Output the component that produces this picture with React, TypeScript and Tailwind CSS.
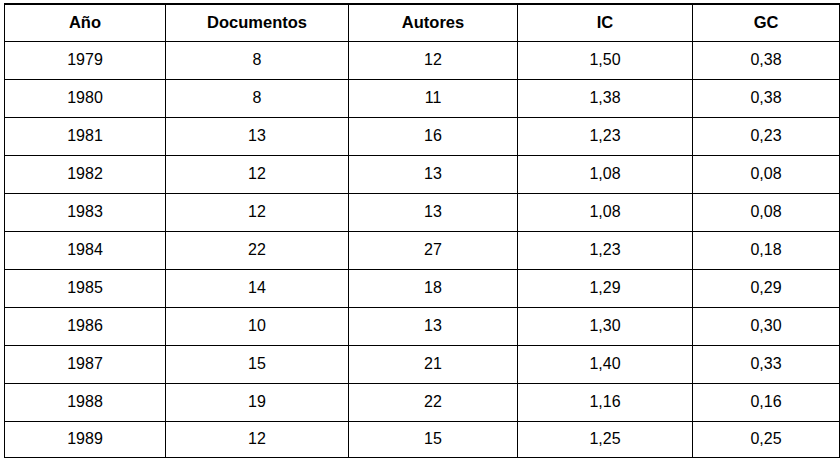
import React from "react";

const rows: string[][] = [
  ["1979", "8", "12", "1,50", "0,38"],
  ["1980", "8", "11", "1,38", "0,38"],
  ["1981", "13", "16", "1,23", "0,23"],
  ["1982", "12", "13", "1,08", "0,08"],
  ["1983", "12", "13", "1,08", "0,08"],
  ["1984", "22", "27", "1,23", "0,18"],
  ["1985", "14", "18", "1,29", "0,29"],
  ["1986", "10", "13", "1,30", "0,30"],
  ["1987", "15", "21", "1,40", "0,33"],
  ["1988", "19", "22", "1,16", "0,16"],
  ["1989", "12", "15", "1,25", "0,25"],
];

const headers = ["Año", "Documentos", "Autores", "IC", "GC"];

export default function App() {
  return (
    <div
      className="w-[840px] h-[462px] bg-white pl-[4px] pt-[3px] text-black"
      style={{ fontFamily: '"Liberation Sans", Arial, sans-serif' }}
    >
      <table className="table-fixed border-collapse w-[835px] text-[16px]">
        <colgroup>
          <col className="w-[161px]" />
          <col className="w-[183px]" />
          <col className="w-[169px]" />
          <col className="w-[175px]" />
          <col className="w-[147px]" />
        </colgroup>
        <thead>
          <tr className="h-[37px]">
            {headers.map((h) => (
              <th
                key={h}
                className="border border-t-2 border-black p-0 text-center align-middle font-bold text-[16.5px]"
              >
                {h}
              </th>
            ))}
          </tr>
        </thead>
        <tbody>
          {rows.map((r, i) => (
            <tr key={i} className={i === rows.length - 1 ? "h-[36px]" : "h-[38px]"}>
              {r.map((c, j) => (
                <td
                  key={j}
                  className="border border-black p-0 text-center align-middle font-normal"
                >
                  {c}
                </td>
              ))}
            </tr>
          ))}
        </tbody>
      </table>
    </div>
  );
}
